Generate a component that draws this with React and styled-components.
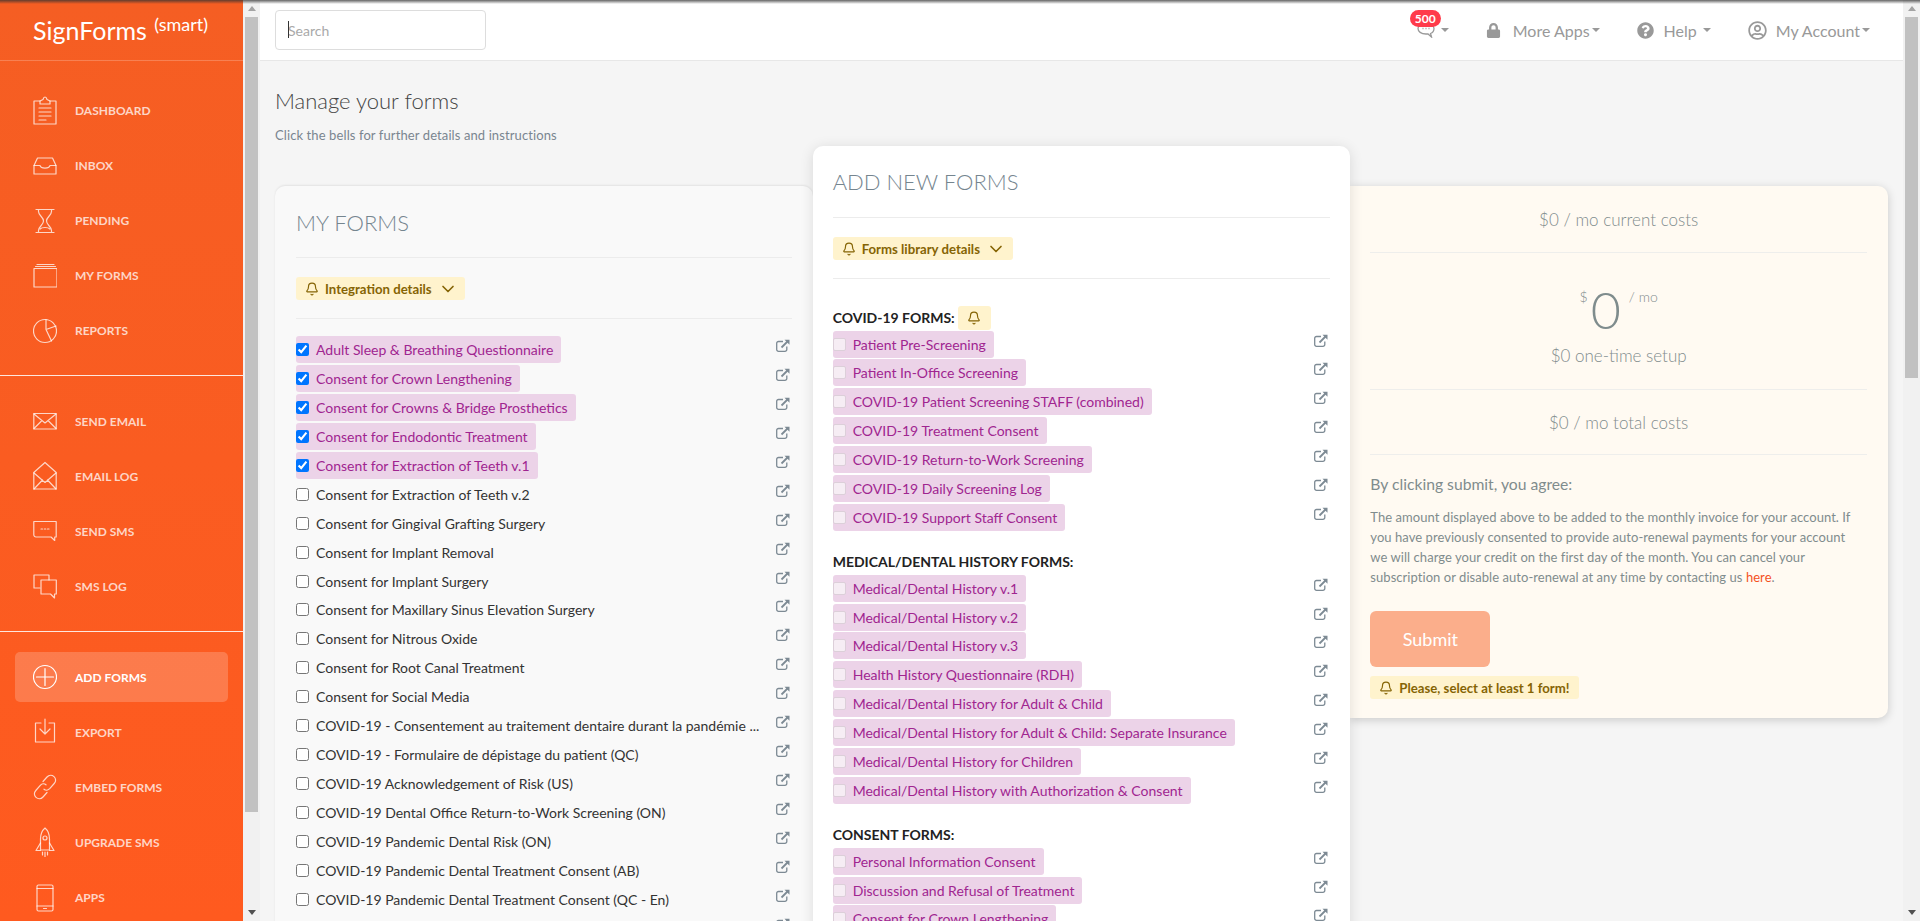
import React from "react";
import styled, { createGlobalStyle } from "styled-components";
import { Bell, ChevronDown } from "lucide-react";
import { FaLock, FaQuestionCircle, FaRegUserCircle } from "react-icons/fa";

const Glob = createGlobalStyle`
  html, body { margin: 0; padding: 0; height: 100%; overflow: hidden; }
  body { font-family: Lato, "Open Sans", sans-serif; color: #333; background: #f5f5f5; }
  * { box-sizing: border-box; }
`;

const Shell = styled.div`
  display: flex;
  height: 100vh;
  overflow: hidden;
  position: relative;
`;

const TopShade = styled.div`
  position: absolute;
  inset: 0 0 auto 0;
  height: 4px;
  z-index: 20;
  pointer-events: none;
  background: linear-gradient(rgba(50, 50, 50, 0.75), rgba(50, 50, 50, 0));
`;

const Rail = styled.div`
  flex: 0 0 17px;
  display: flex;
  flex-direction: column;
  height: 100%;
  background: #f1f1f1;
`;

const RailThumb = styled.div`
  flex: 0 0 ${(p) => p.$h}px;
  margin: 0 2px;
  background: #c1c1c1;
`;

const RailGap = styled.div`
  flex: 1;
`;

const RailArrow = styled.div`
  flex: 0 0 17px;
  display: flex;
  align-items: center;
  justify-content: center;
  &::after {
    content: "";
    border-left: 4.5px solid transparent;
    border-right: 4.5px solid transparent;
    ${(p) => (p.$down ? "border-top: 5px solid #505050;" : "border-bottom: 5px solid #a3a3a3;")}
  }
`;

const Sidebar = styled.aside`
  flex: 0 0 243px;
  height: 100%;
  overflow: hidden;
  background: linear-gradient(#f55e23, #ff5a1f);
  color: #fff;
`;

const Brand = styled.div`
  height: 61px;
  padding: 0 0 0 33px;
  border-bottom: 1px solid rgba(255, 255, 255, 0.22);
  font-size: 25px;
  line-height: 61px;
  white-space: nowrap;
  sup {
    font-size: 18px;
    line-height: 0;
    margin-left: 1px;
    vertical-align: 9px;
  }
`;

const NavSection = styled.nav`
  display: flex;
  flex-direction: column;
  gap: 5px;
  padding: ${(p) => p.$top}px 15px 20px;
  & + & { border-top: 1px solid rgba(255, 255, 255, 0.85); }
`;

const NavRow = styled.a`
  display: flex;
  align-items: center;
  gap: 18px;
  flex: 0 0 50px;
  padding-left: 18px;
  border-radius: 5px;
  font-size: 12px;
  font-weight: 700;
  text-transform: uppercase;
  color: ${(p) => (p.$active ? "#fff" : "rgba(255,255,255,.75)")};
  background: ${(p) => (p.$active ? "rgba(255,255,255,.2)" : "transparent")};
  svg { flex: 0 0 24px; }
`;

const Main = styled.main`
  flex: 1;
  min-width: 0;
  height: 100%;
  overflow: hidden;
  background: #f5f5f5;
`;

const Topbar = styled.header`
  display: flex;
  align-items: center;
  height: 61px;
  padding: 0 33px 0 15px;
  background: #fff;
  border-bottom: 1px solid #e7e7e7;
`;

const SearchBox = styled.div`
  position: relative;
  width: 211px;
  height: 40px;
`;

const SearchInput = styled.input`
  width: 100%;
  height: 100%;
  padding: 0 12px;
  border: 1px solid #ddd;
  border-radius: 4px;
  outline: none;
  font: 400 14px Lato, sans-serif;
  color: #555;
  &::placeholder { color: #a9a9a9; }
`;

const SearchCaret = styled.i`
  position: absolute;
  left: 13px;
  top: 11px;
  width: 1px;
  height: 17px;
  background: #333;
`;

const NavLinks = styled.div`
  margin-left: auto;
  display: flex;
  align-items: center;
  gap: 37px;
`;

const TopLink = styled.a`
  display: flex;
  align-items: center;
  gap: ${(p) => p.$gap || 10}px;
  color: #999;
  font-size: 16px;
  position: relative;
`;

const Caret = styled.i`
  width: 0;
  height: 0;
  margin-left: ${(p) => p.$left ?? -5}px;
  border-top: 4px solid #999;
  border-left: 4px solid transparent;
  border-right: 4px solid transparent;
`;

const Badge = styled.span`
  position: absolute;
  left: -7px;
  top: -12px;
  width: 31px;
  height: 17px;
  border-radius: 9px;
  background: #ff3b4b;
  color: #fff;
  font-size: 12px;
  font-weight: 700;
  line-height: 17px;
  text-align: center;
`;

const PageHead = styled.div`
  padding: 28px 15px 0;
`;

const PageTitle = styled.h1`
  margin: 0;
  font-size: 22px;
  font-weight: 300;
  line-height: 24px;
  color: #444;
`;

const PageNote = styled.p`
  margin: 12px 0 0;
  font-size: 13px;
  letter-spacing: 0.1px;
  line-height: 20px;
  color: #7a8590;
`;

const Columns = styled.div`
  display: grid;
  grid-template-columns: repeat(3, 1fr);
  align-items: start;
  margin: 41px 15px 0;
`;

const Card = styled.section`
  display: flex;
  flex-direction: column;
  align-items: stretch;
  padding: 21px 21px 20px;
  border-radius: 10px;
`;

const ListCard = styled(Card)`
  background: #f9f9f9;
  box-shadow: 0 -1px 2px rgba(0, 0, 0, 0.08);
  min-height: 1100px;
`;

const AddCard = styled(Card)`
  position: relative;
  z-index: 2;
  margin-top: -40px;
  min-height: 1100px;
  padding: 20px 20px 20px;
  background: #fff;
  box-shadow: 0 2px 14px rgba(0, 0, 0, 0.12);
`;

const CardTitle = styled.h2`
  margin: 0 0 ${(p) => p.$below}px;
  font-size: 22px;
  font-weight: 300;
  line-height: 32px;
  color: #75858f;
  text-transform: uppercase;
`;

const Rule = styled.hr`
  width: 100%;
  height: 1px;
  margin: 0;
  border: 0;
  background: #ececec;
`;

const Notice = styled.div`
  display: inline-flex;
  align-items: center;
  align-self: flex-start;
  gap: 6px;
  height: 23px;
  padding: 0 9px;
  border-radius: 3px;
  background: #fff3cd;
  color: #856404;
  font-size: 13.2px;
  font-weight: 700;
  white-space: nowrap;
`;

const DetailNotice = styled(Notice)`
  margin: 19px 0 18px;
  svg + span + svg { margin: 0 -2px 0 0; }
`;

const List = styled.div`
  display: flex;
  flex-direction: column;
  padding-top: ${(p) => p.$top}px;
`;

const Row = styled.div`
  display: flex;
  justify-content: space-between;
  align-items: flex-start;
  height: 28.95px;
`;

const RowLabel = styled.label`
  display: inline-flex;
  align-items: center;
  gap: 7px;
  height: 27px;
  padding-right: 8px;
  border-radius: 3px;
  font-size: 14px;
  white-space: nowrap;
  color: ${(p) => (p.$marked ? "#a02590" : "#333")};
  background: ${(p) => (p.$marked ? "#ecd3e8" : "transparent")};
`;

const Tick = styled.input`
  width: 13px;
  height: 13px;
  margin: 0;
`;

const PaleTick = styled.input`
  appearance: none;
  width: 13px;
  height: 13px;
  margin: 0;
  border: 1px solid #dccfd9;
  border-radius: 2px;
  background: #f6edf4;
`;

const LinkMark = styled.svg`
  flex: 0 0 14px;
  width: 14px;
  height: 13px;
  margin: 3px 2px 0 0;
  color: #7d8a94;
`;

const Group = styled.div`
  margin-top: 15.5px;
`;

const GroupHead = styled.h3`
  display: flex;
  align-items: center;
  gap: 3px;
  height: 26px;
  margin: 0;
  font-size: 14px;
  font-weight: 700;
  color: #222;
  text-transform: uppercase;
`;

const BellPill = styled.span`
  display: inline-flex;
  align-items: center;
  justify-content: center;
  width: 33px;
  height: 24px;
  border-radius: 3px;
  background: #fff3cd;
  color: #856404;
`;

const PriceCard = styled.section`
  display: flex;
  flex-direction: column;
  height: 532px;
  padding: 0 21px 0 20px;
  border-radius: 0 10px 10px 0;
  background: #fffaf2;
  box-shadow: 0 2px 10px rgba(0, 0, 0, 0.18);
`;

const PriceLine = styled.div`
  display: flex;
  align-items: center;
  justify-content: center;
  flex: 0 0 ${(p) => p.$h}px;
  border-bottom: 1px solid #eeeeec;
  font-size: 17px;
  font-weight: 300;
  color: #7f8c8d;
`;

const PriceBlock = styled.div`
  flex: 0 0 137px;
  padding-top: 26px;
  border-bottom: 1px solid #eeeeec;
  text-align: center;
  color: #7f8c8d;
  font-weight: 300;
`;

const Amount = styled.div`
  display: flex;
  justify-content: center;
  align-items: flex-start;
  height: 60px;
  font-size: 14px;
  line-height: 36px;
  span { margin: 0 8px 0 3px; font-size: 52px; line-height: 60px; }
`;

const SetupLine = styled.div`
  margin-top: 5px;
  font-size: 17px;
  line-height: 24px;
`;

const AgreeTitle = styled.div`
  margin-top: 18px;
  font-size: 15.7px;
  line-height: 22px;
  color: #7f8c8d;
`;

const AgreeText = styled.p`
  margin: 12px 0 0;
  padding-right: 12px;
  font-size: 13px;
  letter-spacing: 0.05px;
  line-height: 20px;
  color: #7f8c8d;
  a { color: #f4511e; }
`;

const SubmitButton = styled.button`
  align-self: flex-start;
  flex: 0 0 56px;
  width: 120px;
  margin-top: 24px;
  border: 0;
  border-radius: 6px;
  background: #fbae8b;
  color: #fff;
  font: 400 18px Lato, sans-serif;
`;

const WarnNotice = styled(Notice)`
  margin-top: 9px;
  flex: 0 0 23px;
`;

const I = ({ children }) => (
  <svg width="24" height="30" viewBox="0 0 24 30" fill="none" stroke="currentColor" strokeWidth="1.2" strokeLinejoin="round" strokeLinecap="round">
    {children}
  </svg>
);

const icons = {
  dashboard: <I><path d="M7 6H1v23h22V6h-6" /><path d="M7 9V6l3-1.5C10.5 2.5 11 2 12 2s1.5.5 2 2.5L17 6v3z" /><path d="M6 13h12M6 17h12M6 21h12M6 25h7" /></I>,
  inbox: <I><path d="M1 15.5 4.5 8h15l3.5 7.5V24H1z" /><path d="M1 15.5h6c1 3.5 9 3.5 10 0h6" /></I>,
  pending: <I><path d="M3 4.5h18M3 27.5h18M5.500 4.500v2c0 4 5 5.500 5 9.500s-5 5.500-5 9.500v2M18.500 4.500v2c0 4-5 5.500-5 9.500s5 5.500 5 9.500v2" /><path d="M7 24c2-2 8-2 10 0" /></I>,
  forms: <I><path d="M1 8.500h23V27H1z" /><path d="M2.500 6.500h20M4 4.500h17" /></I>,
  reports: <I><circle cx="12" cy="16" r="11.500" /><path d="M13 4.500v10L23 11M13 14.500 18.500 26" /></I>,
  send: <I><path d="M.8 7.500h22.400v15.500H.8z" /><path d="M1 8l11 9 11-9M1 22.500l8-8M23 22.500l-8-8" /></I>,
  log: <I><path d="M.8 11.500 12 1.500l11.200 10V28H.8z" /><path d="M1 28 9.500 19M23 28l-8.500-9M1 12l11 9.500L23 12" /></I>,
  sms: <I><path d="M.8 5.500h22.400v15.500h-1.500v3.500L18 21H3a2.200 2.200 0 0 1-2.200-2.200z" /><path d="M8 13h1.500M11.300 13h1.500M14.500 13h1.500" /></I>,
  smslog: <I><path d="M7 17H1V4h15v5" /><path d="M8 9h15.300v14h-1.800v4l-4-4H8z" /></I>,
  add: <I><circle cx="12" cy="15" r="11.500" /><path d="M12 6.500v17M3.500 15h17" /></I>,
  exportIcon: <I><path d="M8 6H2.500v19h19V6H16" /><path d="M12 2v15M7 12l5 5 5-5" /></I>,
  embed: <I><path d="M10 9.500l4-4.500c2-2.200 5-2.200 7-.4s2.200 4.700.2 6.900l-4.500 5.200c-1.500 1.600-4 2-5.700.5" /><path d="M14 20.500l-4 4.500c-2 2.200-5 2.200-7 .4s-2.200-4.700-.2-6.900l4.500-5.200c1.500-1.600 4-2 5.700-.5" /></I>,
  upgrade: <I><path d="M12 1c-3.500 3-4.500 7-4.500 11v11h9V12c0-4-1-8-4.500-11z" /><circle cx="12" cy="11" r="2" /><path d="M7.500 16 3 23.500h4.500M16.500 16l4.500 7.500h-4.500M12 25v5M9.500 25v3M14.500 25v3" /></I>,
  apps: <I><path d="M5.500 3h13a1.500 1.500 0 0 1 1.500 1.500v23a1.500 1.500 0 0 1-1.500 1.500h-13A1.500 1.500 0 0 1 4 27.500v-23A1.500 1.500 0 0 1 5.500 3z" /><path d="M4 6.500h16M4 24h16M10.500 26.500h3" /></I>,
};

const navGroups = [
  { top: 24, items: [["Dashboard", "dashboard"], ["Inbox", "inbox"], ["Pending", "pending"], ["My Forms", "forms"], ["Reports", "reports"]] },
  { top: 20, items: [["Send Email", "send"], ["Email Log", "log"], ["Send SMS", "sms"], ["SMS Log", "smslog"]] },
  { top: 20, items: [["Add Forms", "add"], ["Export", "exportIcon"], ["Embed Forms", "embed"], ["Upgrade SMS", "upgrade"], ["Apps", "apps"]] },
];

const myForms = [
  "Adult Sleep & Breathing Questionnaire",
  "Consent for Crown Lengthening",
  "Consent for Crowns & Bridge Prosthetics",
  "Consent for Endodontic Treatment",
  "Consent for Extraction of Teeth v.1",
  "Consent for Extraction of Teeth v.2",
  "Consent for Gingival Grafting Surgery",
  "Consent for Implant Removal",
  "Consent for Implant Surgery",
  "Consent for Maxillary Sinus Elevation Surgery",
  "Consent for Nitrous Oxide",
  "Consent for Root Canal Treatment",
  "Consent for Social Media",
  "COVID-19 - Consentement au traitement dentaire durant la pandémie ...",
  "COVID-19 - Formulaire de dépistage du patient (QC)",
  "COVID-19 Acknowledgement of Risk (US)",
  "COVID-19 Dental Office Return-to-Work Screening (ON)",
  "COVID-19 Pandemic Dental Risk (ON)",
  "COVID-19 Pandemic Dental Treatment Consent (AB)",
  "COVID-19 Pandemic Dental Treatment Consent (QC - En)",
  "COVID-19 Pandemic Dental Treatment Consent (QC - Fr)",
];

const library = [
  {
    title: "COVID-19 Forms:",
    bell: true,
    forms: ["Patient Pre-Screening", "Patient In-Office Screening", "COVID-19 Patient Screening STAFF (combined)", "COVID-19 Treatment Consent", "COVID-19 Return-to-Work Screening", "COVID-19 Daily Screening Log", "COVID-19 Support Staff Consent"],
  },
  {
    title: "Medical/Dental History Forms:",
    forms: ["Medical/Dental History v.1", "Medical/Dental History v.2", "Medical/Dental History v.3", "Health History Questionnaire (RDH)", "Medical/Dental History for Adult & Child", "Medical/Dental History for Adult & Child: Separate Insurance", "Medical/Dental History for Children", "Medical/Dental History with Authorization & Consent"],
  },
  {
    title: "Consent Forms:",
    forms: ["Personal Information Consent", "Discussion and Refusal of Treatment", "Consent for Crown Lengthening"],
  },
];

const OpenLink = () => (
  <LinkMark viewBox="0 0 14 13" fill="none" stroke="currentColor" strokeWidth="1.3">
    <path d="M7 2.500H2.500A1.800 1.800 0 0 0 .7 4.300v6.200a1.800 1.800 0 0 0 1.800 1.800h6.500a1.800 1.800 0 0 0 1.800-1.800V7.500" />
    <path d="M5.500 8.500 12 2" strokeWidth="1.800" />
    <path d="M8.500.8h5v5z" fill="currentColor" stroke="none" />
  </LinkMark>
);

const ChatIcon = () => (
  <svg width="18" height="16" viewBox="0 0 18 16" fill="none" stroke="#999" strokeWidth="1.300">
    <path d="M9 1C4.500 1 1 3.200 1 6.500c0 3 3 5.500 8 5.500h2l3.500 3-1-3.500c2-.8 3.500-2.500 3.500-5C17 3.200 13.500 1 9 1z" />
    <path d="M5.500 6.500h1M8.500 6.500h1M11.500 6.500h1" strokeWidth="1.600" />
  </svg>
);

const FormRow = ({ name, checked, marked, pale }) => (
  <Row>
    <RowLabel $marked={marked}>
      {pale ? <PaleTick type="checkbox" readOnly /> : <Tick type="checkbox" checked={!!checked} readOnly />}
      {name}
    </RowLabel>
    <OpenLink />
  </Row>
);

const ScrollRail = ({ thumb }) => (
  <Rail>
    <RailArrow />
    <RailThumb $h={thumb} />
    <RailGap />
    <RailArrow $down />
  </Rail>
);

export default function App() {
  return (
    <Shell>
      <Glob />
      <TopShade />
      <Sidebar>
        <Brand>SignForms <sup>(smart)</sup></Brand>
        {navGroups.map((group, i) => (
          <NavSection key={i} $top={group.top}>
            {group.items.map(([label, icon]) => (
              <NavRow key={label} $active={label === "Add Forms"}>
                {icons[icon]}
                {label}
              </NavRow>
            ))}
          </NavSection>
        ))}
      </Sidebar>
      <ScrollRail thumb={795} />
      <Main>
        <Topbar>
          <SearchBox>
            <SearchInput placeholder="Search" />
            <SearchCaret />
          </SearchBox>
          <NavLinks>
            <TopLink $gap={6}>
              <ChatIcon />
              <Badge>500</Badge>
              <Caret $left={0} />
            </TopLink>
            <TopLink $gap={12}>
              <FaLock size={15} />
              More Apps
              <Caret $left={-10} />
            </TopLink>
            <TopLink $gap={10}>
              <FaQuestionCircle size={17} />
              Help
              <Caret $left={-4} />
            </TopLink>
            <TopLink $gap={9}>
              <FaRegUserCircle size={19} />
              My Account
              <Caret $left={-7} />
            </TopLink>
          </NavLinks>
        </Topbar>
        <PageHead>
          <PageTitle>Manage your forms</PageTitle>
          <PageNote>Click the bells for further details and instructions</PageNote>
        </PageHead>
        <Columns>
          <ListCard>
            <CardTitle $below={18}>My Forms</CardTitle>
            <Rule />
            <DetailNotice>
              <Bell size={14} />
              <span>Integration details</span>
              <ChevronDown size={20} />
            </DetailNotice>
            <Rule />
            <List $top={17}>
              {myForms.map((name, i) => (
                <FormRow key={name} name={name} checked={i < 5} marked={i < 5} />
              ))}
            </List>
          </ListCard>
          <AddCard>
            <CardTitle $below={19}>Add New Forms</CardTitle>
            <Rule />
            <DetailNotice>
              <Bell size={14} />
              <span>Forms library details</span>
              <ChevronDown size={20} />
            </DetailNotice>
            <Rule />
            <List $top={10}>
              {library.map((group) => (
                <Group key={group.title}>
                  <GroupHead>
                    {group.title}
                    {group.bell && (
                      <BellPill>
                        <Bell size={14} />
                      </BellPill>
                    )}
                  </GroupHead>
                  {group.forms.map((name) => (
                    <FormRow key={name} name={name} marked pale />
                  ))}
                </Group>
              ))}
            </List>
          </AddCard>
          <PriceCard>
            <PriceLine $h={67}>$0 / mo current costs</PriceLine>
            <PriceBlock>
              <Amount>
                $<span>0</span>/ mo
              </Amount>
              <SetupLine>$0 one-time setup</SetupLine>
            </PriceBlock>
            <PriceLine $h={65}>$0 / mo total costs</PriceLine>
            <AgreeTitle>By clicking submit, you agree:</AgreeTitle>
            <AgreeText>
              The amount displayed above to be added to the monthly invoice for your account. If you have previously consented to provide auto-renewal payments for your account we will charge your credit on the first day of the month. You can cancel your subscription or disable auto-renewal at any time by contacting us <a>here</a>.
            </AgreeText>
            <SubmitButton>Submit</SubmitButton>
            <WarnNotice>
              <Bell size={14} />
              <span>Please, select at least 1 form!</span>
            </WarnNotice>
          </PriceCard>
        </Columns>
      </Main>
      <ScrollRail thumb={361} />
    </Shell>
  );
}
